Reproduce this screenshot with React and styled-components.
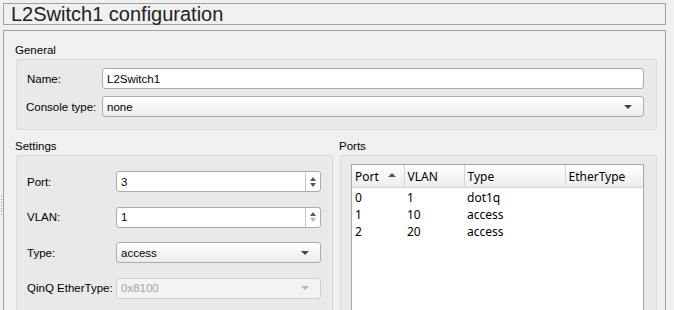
import React from "react";
import styled, { createGlobalStyle } from "styled-components";

const Global = createGlobalStyle`
  html, body { margin: 0; padding: 0; background: #f0f0f0; overflow: hidden; }
  body { font-family: "Liberation Sans", Arial, sans-serif; font-size: 12px; color: #000; }
`;

const Page = styled.div`
  position: relative;
  width: 674px;
  height: 310px;
  box-sizing: border-box;
  padding: 3px 8px 0 3px;
  display: flex;
  flex-direction: column;
  gap: 5px;
  overflow: hidden;
`;

const TitleBox = styled.div`
  height: 24px;
  box-sizing: border-box;
  border: 1px solid #a0a0a0;
  display: flex;
  align-items: center;
  padding-left: 7px;
  font-size: 20px;
  color: #222;
  line-height: 1;
`;

const MainPanel = styled.div`
  flex: 1;
  border: 1px solid #a0a0a0;
  border-bottom: none;
  padding: 3px 8px 0 12px;
  display: flex;
  flex-direction: column;
`;

const Heading = styled.div`
  height: 25px;
  box-sizing: border-box;
  display: flex;
  align-items: flex-end;
  padding: 0 0 3px 0;
  margin-left: -1px;
  font-size: 11.5px;
`;

const GroupBox = styled.div`
  background: #e9e9e9;
  border: 1px solid #d9d9d9;
  border-radius: 2px;
  box-sizing: border-box;
  padding: ${(p) => p.$pad};
`;

const FormGrid = styled.div`
  display: grid;
  grid-template-columns: ${(p) => p.$label}px 1fr;
  row-gap: ${(p) => p.$gap}px;
  align-items: center;
`;

const Label = styled.label`
  font-size: 11.5px;
  white-space: nowrap;
  padding-left: ${(p) => p.$indent || 0}px;
`;

const TextField = styled.div`
  height: 21px;
  box-sizing: border-box;
  background: #fff;
  border: 1px solid #ababab;
  border-radius: 3px;
  display: flex;
  align-items: center;
  padding-left: 4px;
  font-size: 11.5px;
`;

const SpinBox = styled.div`
  height: 21px;
  box-sizing: border-box;
  background: #fff;
  border: 1px solid #ababab;
  border-radius: 3px;
  display: flex;
  align-items: stretch;
  font-size: 11.5px;
`;

const SpinValue = styled.div`
  flex: 1;
  display: flex;
  align-items: center;
  padding-left: 4px;
`;

const SpinButtons = styled.div`
  width: 14px;
  border-left: 1px solid #c8c8c8;
  display: flex;
  flex-direction: column;
  align-items: center;
  justify-content: center;
  gap: 2px;
`;

const Tri = styled.div`
  width: 0;
  height: 0;
  border-left: ${(p) => p.$w}px solid transparent;
  border-right: ${(p) => p.$w}px solid transparent;
  ${(p) =>
    p.$up
      ? `border-bottom: ${p.$h}px solid ${p.$c};`
      : `border-top: ${p.$h}px solid ${p.$c};`}
`;

const Select = styled.div`
  height: 21px;
  box-sizing: border-box;
  border: 1px solid ${(p) => (p.$disabled ? "#cfcfcf" : "#acacac")};
  border-radius: 3px;
  background: ${(p) =>
    p.$disabled ? "#f3f3f3" : "linear-gradient(#ffffff, #f6f6f6 50%, #ebebeb)"};
  color: ${(p) => (p.$disabled ? "#a3a3a3" : "#000")};
  display: flex;
  align-items: center;
  justify-content: space-between;
  padding: 0 11px 0 4px;
  font-size: 11.5px;
`;

const Columns = styled.div`
  display: grid;
  grid-template-columns: 1fr 1fr;
  column-gap: 7px;
  flex: 1;
`;

const Column = styled.div`
  display: flex;
  flex-direction: column;
`;

const Fill = styled(GroupBox)`
  flex: 1;
`;

const TableFrame = styled.div`
  background: #fff;
  border: 1px solid #a5a5a5;
  height: 200px;
  font-family: "Noto Sans", "Open Sans", sans-serif;
  font-size: 12px;
`;

const Table = styled.table`
  border-collapse: collapse;
  width: 100%;
  table-layout: fixed;
`;

const Th = styled.th`
  height: 21px;
  padding: 1px 0 0 3px;
  text-align: left;
  font-weight: normal;
  background: linear-gradient(#ffffff, #f4f4f4 60%, #ececec);
  border-bottom: 1px solid #d5d5d5;
  border-right: 1px solid #d5d5d5;
  position: relative;
  color: #000;
  &:last-child { border-right: none; }
`;

const SortArrow = styled.span`
  position: absolute;
  right: 8px;
  top: 8px;
  width: 0;
  height: 0;
  border-left: 4px solid transparent;
  border-right: 4px solid transparent;
  border-bottom: 4px solid #555;
`;

const Td = styled.td`
  height: 17px;
  padding: ${(p) => (p.$first ? "1px" : "0")} 0 0 3px;
  line-height: 17px;
`;

const Splitter = styled.div`
  position: absolute;
  left: 1px;
  top: 196px;
  width: 1px;
  height: 19px;
  background: repeating-linear-gradient(#9a9a9a 0 1px, transparent 1px 3px);
`;

const rows = [
  ["0", "1", "dot1q", ""],
  ["1", "10", "access", ""],
  ["2", "20", "access", ""],
];

export default function App() {
  return (
    <>
      <Global />
      <Page>
        <Splitter />
        <TitleBox>L2Switch1 configuration</TitleBox>
        <MainPanel>
          <Heading>General</Heading>
          <GroupBox $pad="8px 12px 12px 9px">
            <FormGrid $label={76} $gap={7}>
              <Label $indent={1}>Name:</Label>
              <TextField>L2Switch1</TextField>
              <Label>Console type:</Label>
              <Select>
                <span>none</span>
                <Tri $w={4} $h={4} $c="#444" />
              </Select>
            </FormGrid>
          </GroupBox>
          <Columns>
            <Column>
              <Heading>Settings</Heading>
              <Fill $pad="15px 11px 0 10px">
                <FormGrid $label={89} $gap={14.5}>
                  <Label>Port:</Label>
                  <SpinBox>
                    <SpinValue>3</SpinValue>
                    <SpinButtons>
                      <Tri $up $w={3.5} $h={4} $c="#555" />
                      <Tri $w={3.5} $h={4} $c="#555" />
                    </SpinButtons>
                  </SpinBox>
                  <Label>VLAN:</Label>
                  <SpinBox>
                    <SpinValue>1</SpinValue>
                    <SpinButtons>
                      <Tri $up $w={3.5} $h={4} $c="#555" />
                      <Tri $w={3.5} $h={4} $c="#b5b5b5" />
                    </SpinButtons>
                  </SpinBox>
                  <Label>Type:</Label>
                  <Select>
                    <span>access</span>
                    <Tri $w={4} $h={4} $c="#444" />
                  </Select>
                  <Label>QinQ EtherType:</Label>
                  <Select $disabled>
                    <span>0x8100</span>
                    <Tri $w={4} $h={4} $c="#b5b5b5" />
                  </Select>
                </FormGrid>
              </Fill>
            </Column>
            <Column>
              <Heading>Ports</Heading>
              <Fill $pad="8px 12px 0 10px">
                <TableFrame>
                  <Table>
                    <colgroup>
                      <col style={{ width: 52 }} />
                      <col style={{ width: 60 }} />
                      <col style={{ width: 101 }} />
                      <col />
                    </colgroup>
                    <thead>
                      <tr>
                        <Th>
                          Port
                          <SortArrow />
                        </Th>
                        <Th>VLAN</Th>
                        <Th>Type</Th>
                        <Th>EtherType</Th>
                      </tr>
                    </thead>
                    <tbody>
                      {rows.map((r, ri) => (
                        <tr key={r[0]}>
                          {r.map((c, i) => (
                            <Td key={i} $first={ri === 0}>{c}</Td>
                          ))}
                        </tr>
                      ))}
                    </tbody>
                  </Table>
                </TableFrame>
              </Fill>
            </Column>
          </Columns>
        </MainPanel>
      </Page>
    </>
  );
}
